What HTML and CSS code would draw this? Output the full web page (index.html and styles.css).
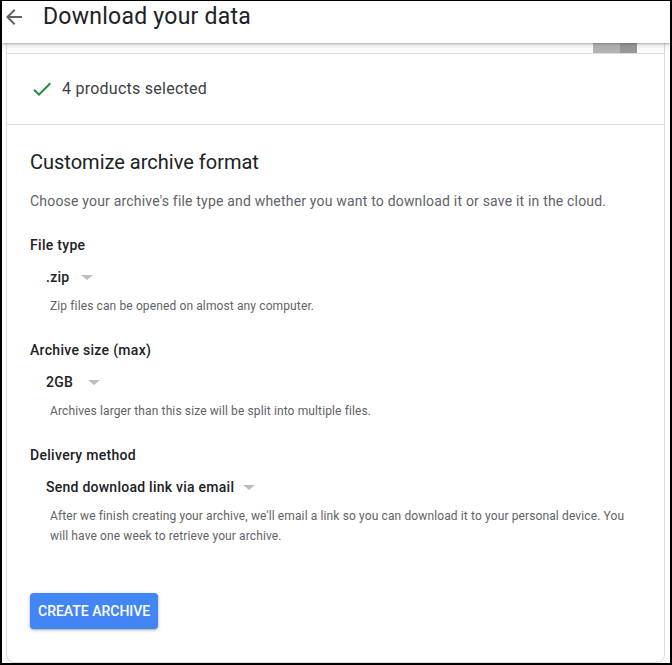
FILE: index.html
```html
<!DOCTYPE html>
<html lang="en">
<head>
<meta charset="utf-8">
<title>Download your data</title>
<link rel="stylesheet" href="styles.css">
</head>
<body>
<div class="frame">
  <header class="topbar">
    <div class="topbar-row">
      <svg class="back-icon" viewBox="0 0 24 24" width="24" height="24" aria-hidden="true"><path d="M20 11H7.83l5.59-5.59L12 4l-8 8 8 8 1.41-1.41L7.83 13H20v-2z" fill="#5f6368"/></svg>
      <h1 class="page-title">Download your data</h1>
    </div>
  </header>
  <main class="content">
    <div class="card">
      <div class="card-prev">
        <span class="scroll-light"></span><span class="scroll-dark"></span>
      </div>
      <div class="selected-row">
        <svg class="check-icon" viewBox="0 0 24 24" width="24" height="24" aria-hidden="true"><path d="M9 16.17L4.83 12l-1.42 1.41L9 19 21 7l-1.41-1.41z" fill="#1e8e3e"/></svg>
        <span class="selected-text">4 products selected</span>
      </div>
      <section class="format">
        <h2 class="format-title">Customize archive format</h2>
        <p class="format-desc">Choose your archive's file type and whether you want to download it or save it in the cloud.</p>

        <div class="option">
          <div class="option-label">File type</div>
          <div class="select"><span class="select-value w-zip">.zip</span><span class="caret"></span></div>
          <p class="option-help">Zip files can be opened on almost any computer.</p>
        </div>

        <div class="option">
          <div class="option-label">Archive size (max)</div>
          <div class="select"><span class="select-value w-size">2GB</span><span class="caret"></span></div>
          <p class="option-help">Archives larger than this size will be split into multiple files.</p>
        </div>

        <div class="option option-last">
          <div class="option-label">Delivery method</div>
          <div class="select"><span class="select-value w-delivery">Send download link via email</span><span class="caret"></span></div>
          <p class="option-help">After we finish creating your archive, we'll email a link so you can download it to your personal device. You will have one week to retrieve your archive.</p>
        </div>

        <button class="create-btn" type="button">CREATE ARCHIVE</button>
      </section>
    </div>
  </main>
</div>
</body>
</html>
```
FILE: styles.css
```css
* { box-sizing: border-box; }
html, body { margin: 0; padding: 0; background: #fff; }
body {
  font-family: Roboto, "Liberation Sans", Arial, sans-serif;
  color: #202124;
}
.frame {
  width: 672px;
  height: 665px;
  border-style: solid;
  border-color: #000;
  border-width: 1px 2px 2px 2px;
  overflow: hidden;
  display: flex;
  flex-direction: column;
  background: #fff;
}
.topbar {
  height: 42px;
  flex: none;
  padding-top: 2px;
  background: #fff;
  position: relative;
  z-index: 2;
  box-shadow: 0 1px 2px rgba(60,64,67,.35), 0 2px 7px 1px rgba(60,64,67,.15);
}
.topbar-row {
  height: 28px;
  display: flex;
  align-items: center;
  gap: 17px;
}
.back-icon { display: block; flex: none; }
.page-title {
  margin: 0;
  font-size: 23px;
  line-height: 28px;
  font-weight: 400;
  letter-spacing: 0.25px;
  color: #202124;
}
.content {
  flex: 1;
  padding: 0 5px 0 4px;
  overflow: hidden;
}
.card {
  border: 1px solid #dadce0;
  border-top: none;
  border-radius: 0 0 8px 8px;
  height: 620px;
  display: flex;
  flex-direction: column;
}
.card-prev {
  height: 10px;
  flex: none;
  border-bottom: 1px solid #dadce0;
  box-sizing: content-box;
  display: flex;
  padding-left: 586px;
}
.scroll-light { width: 27px; background: #b4b4b4; }
.scroll-dark { width: 17px; background: #999; }
.selected-row {
  height: 70px;
  flex: none;
  box-sizing: content-box;
  border-bottom: 1px solid #dadce0;
  display: flex;
  align-items: center;
  gap: 8px;
  padding-left: 23px;
}
.check-icon { display: block; flex: none; }
.selected-text {
  font-size: 16px;
  line-height: 24px;
  letter-spacing: 0.25px;
  color: #3c4043;
}
.format {
  flex: 1;
  padding: 23px 24px 32px 23px;
}
.format-title {
  margin: 0;
  font-size: 20px;
  line-height: 28px;
  font-weight: 400;
  color: #202124;
}
.format-desc {
  margin: 15px 0 0;
  font-size: 14px;
  line-height: 20px;
  letter-spacing: 0.19px;
  color: #5f6368;
}
.option { margin-top: 24px; }
.option + .option { margin-top: 24px; }
.option-label {
  font-size: 14px;
  line-height: 20px;
  font-weight: 500;
  letter-spacing: 0.3px;
  color: #202124;
}
.select {
  margin-top: 12px;
  margin-left: 16px;
  display: flex;
  align-items: center;
  height: 20px;
}
.select-value {
  font-size: 14px;
  line-height: 20px;
  font-weight: 500;
  letter-spacing: 0.25px;
  color: #202124;
}
.w-zip { min-width: 35px; }
.w-size { min-width: 42px; }
.w-delivery { padding-right: 9px; }
.caret {
  width: 0;
  height: 0;
  border-left: 6px solid transparent;
  border-right: 6px solid transparent;
  border-top: 5px solid #bdbdbd;
  margin-top: 1px;
}
.option-help {
  margin: 9px 0 0 20px;
  max-width: 580px;
  font-size: 12px;
  line-height: 20px;
  letter-spacing: 0.12px;
  color: #5f6368;
}
.create-btn {
  margin-top: 47px;
  height: 36px;
  padding: 0 8px;
  border: none;
  border-radius: 4px;
  background: #4285f4;
  color: #fff;
  font-family: Roboto, "Liberation Sans", Arial, sans-serif;
  font-size: 14px;
  font-weight: 500;
  box-shadow: 0 1px 2px rgba(60,64,67,.3), 0 1px 3px 1px rgba(60,64,67,.15);
  cursor: pointer;
}
```
